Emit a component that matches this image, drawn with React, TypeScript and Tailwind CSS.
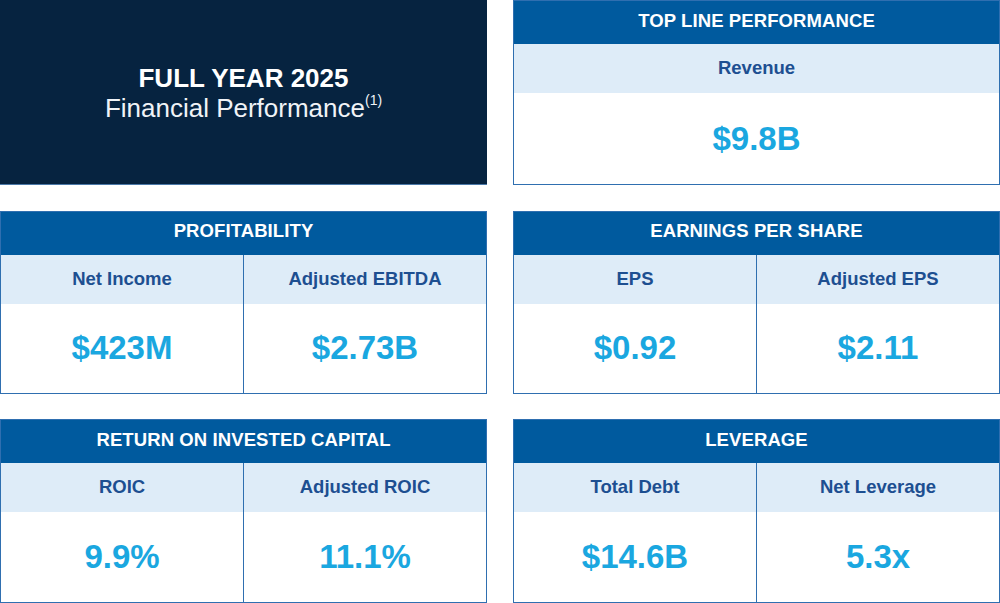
import React from "react";

type Cell = { label: string; value: string };

function Panel({ title, cells, h }: { title: string; cells: Cell[]; h: string }) {
  return (
    <div className={`flex flex-col border border-[#2f6fb0] bg-white ${h}`}>
      <div className="h-[43px] shrink-0 bg-[#005a9e] flex items-center justify-center pb-[4px] text-white font-bold text-[18.5px] tracking-[0.1px]">
        {title}
      </div>
      <div className="flex flex-1">
        {cells.map((c, i) => (
          <div
            key={c.label}
            className={`flex-1 flex flex-col ${i > 0 ? "border-l border-[#2f6fb0]" : ""}`}
          >
            <div className="h-[49px] shrink-0 bg-[#deecf8] flex items-center justify-center pb-[1px] text-[#1d4f91] font-bold text-[18.5px]">
              {c.label}
            </div>
            <div className="flex-1 flex items-center justify-center text-[#1aa7e0] font-bold text-[33px]">
              {c.value}
            </div>
          </div>
        ))}
      </div>
    </div>
  );
}

export default function App() {
  return (
    <div
      className="w-[1000px] h-[603px] bg-white grid grid-cols-[487px_487px] gap-x-[26px] grid-rows-[185px_183px_184px] gap-y-[25.5px] overflow-hidden"
      style={{ fontFamily: '"Liberation Sans", Arial, sans-serif' }}
    >
      <div className="bg-[#062340] flex flex-col items-center justify-center text-white border-b border-[#4a78a8] pt-[2px]">
        <div className="font-bold text-[26px] leading-[30px]">FULL YEAR 2025</div>
        <div className="text-[26px] leading-[30px] text-[#f0f3f7]">
          Financial Performance<sup className="text-[14px] align-super relative -top-[2px]">(1)</sup>
        </div>
      </div>
      <Panel title="TOP LINE PERFORMANCE" h="h-[185px]" cells={[{ label: "Revenue", value: "$9.8B" }]} />
      <Panel
        title="PROFITABILITY"
        h="h-[183px]"
        cells={[
          { label: "Net Income", value: "$423M" },
          { label: "Adjusted EBITDA", value: "$2.73B" },
        ]}
      />
      <Panel
        title="EARNINGS PER SHARE"
        h="h-[183px]"
        cells={[
          { label: "EPS", value: "$0.92" },
          { label: "Adjusted EPS", value: "$2.11" },
        ]}
      />
      <Panel
        title="RETURN ON INVESTED CAPITAL"
        h="h-[184px]"
        cells={[
          { label: "ROIC", value: "9.9%" },
          { label: "Adjusted ROIC", value: "11.1%" },
        ]}
      />
      <Panel
        title="LEVERAGE"
        h="h-[184px]"
        cells={[
          { label: "Total Debt", value: "$14.6B" },
          { label: "Net Leverage", value: "5.3x" },
        ]}
      />
    </div>
  );
}
